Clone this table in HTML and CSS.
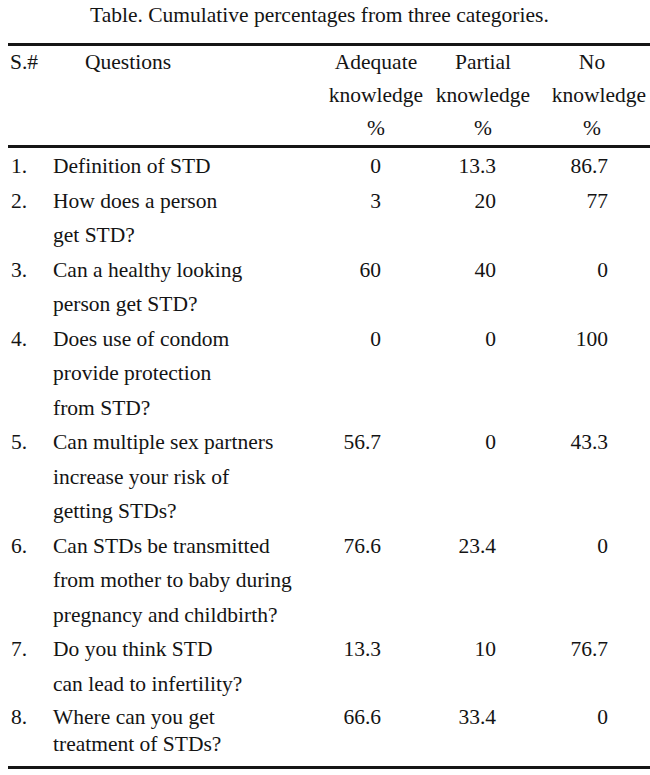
FILE: index.html
```html
<!DOCTYPE html>
<html>
<head>
<meta charset="utf-8">
<link rel="stylesheet" href="styles.css">
</head>
<body>
<div class="page">
  <div class="title">Table. Cumulative percentages from three categories.</div>
  <table class="data">
    <colgroup>
      <col class="c-num"><col class="c-q"><col class="c-a"><col class="c-p"><col class="c-n">
    </colgroup>
    <thead>
      <tr>
        <th class="sn">S.#</th>
        <th class="qh">Questions</th>
        <th class="h ha"><div>Adequate</div><div>knowledge</div><div>%</div></th>
        <th class="h hp"><div>Partial</div><div>knowledge</div><div>%</div></th>
        <th class="h hn"><div class="shift">No</div><div>knowledge</div><div class="shift">%</div></th>
      </tr>
    </thead>
    <tbody>
      <tr><td class="sn">1.</td><td class="q">Definition of STD</td><td class="va">0</td><td class="vp">13.3</td><td class="vn">86.7</td></tr>
      <tr><td class="sn">2.</td><td class="q">How does a person<br>get STD?</td><td class="va">3</td><td class="vp">20</td><td class="vn">77</td></tr>
      <tr><td class="sn">3.</td><td class="q">Can a healthy looking<br>person get STD?</td><td class="va">60</td><td class="vp">40</td><td class="vn">0</td></tr>
      <tr><td class="sn">4.</td><td class="q">Does use of condom<br>provide protection<br>from STD?</td><td class="va">0</td><td class="vp">0</td><td class="vn">100</td></tr>
      <tr><td class="sn">5.</td><td class="q">Can multiple sex partners<br>increase your risk of<br>getting STDs?</td><td class="va">56.7</td><td class="vp">0</td><td class="vn">43.3</td></tr>
      <tr><td class="sn">6.</td><td class="q">Can STDs be transmitted<br>from mother to baby during<br>pregnancy and childbirth?</td><td class="va">76.6</td><td class="vp">23.4</td><td class="vn">0</td></tr>
      <tr><td class="sn">7.</td><td class="q">Do you think STD<br>can lead to infertility?</td><td class="va">13.3</td><td class="vp">10</td><td class="vn">76.7</td></tr>
      <tr class="last"><td class="sn">8.</td><td class="q">Where can you get<br>treatment of STDs?</td><td class="va">66.6</td><td class="vp">33.4</td><td class="vn">0</td></tr>
    </tbody>
  </table>
</div>
</body>
</html>
```
FILE: styles.css
```css
html, body {
  margin: 0;
  padding: 0;
  background: #ffffff;
  overflow: hidden;
}
.page {
  width: 650px;
  height: 775px;
  font-family: "Liberation Serif", "Times New Roman", serif;
  font-size: 21.5px;
  color: #141414;
}
.title {
  line-height: 30px;
  padding-left: 90px;
  white-space: nowrap;
}
.data {
  margin-top: 13px;
  margin-left: 8px;
  width: 660px;
  border-collapse: collapse;
  table-layout: fixed;
  border-top: 3px solid #161616;
  border-bottom: 3px solid #161616;
}
.c-num { width: 45px; }
.c-q { width: 273px; }
.c-a { width: 100px; }
.c-p { width: 110px; }
.c-n { width: 132px; }
.data th, .data td {
  padding: 0;
  vertical-align: top;
  font-weight: normal;
  white-space: nowrap;
}
.data thead th {
  line-height: 33px;
  border-bottom: 3px solid #161616;
}
.data th.sn { text-align: left; padding-left: 2px; }
.data th.qh { text-align: left; padding-left: 32px; }
.data th.h { text-align: center; }
.data th.hp { padding-left: 4px; }
.data th.hn { padding-right: 6px; }
.data th.hn .shift { padding-right: 14px; }
.data tbody td {
  line-height: 34.5px;
}
.data tbody tr:first-child td { padding-top: 1px; }
.data td.sn { text-align: left; padding-left: 3px; }
.data td.q { text-align: left; }
.data td.va { text-align: right; padding-right: 45px; }
.data td.vp { text-align: right; padding-right: 40px; }
.data td.vn { text-align: right; padding-right: 60px; }
.data tr.last td {
  line-height: 27px;
  padding-top: 3px;
  padding-bottom: 8px;
}
```
